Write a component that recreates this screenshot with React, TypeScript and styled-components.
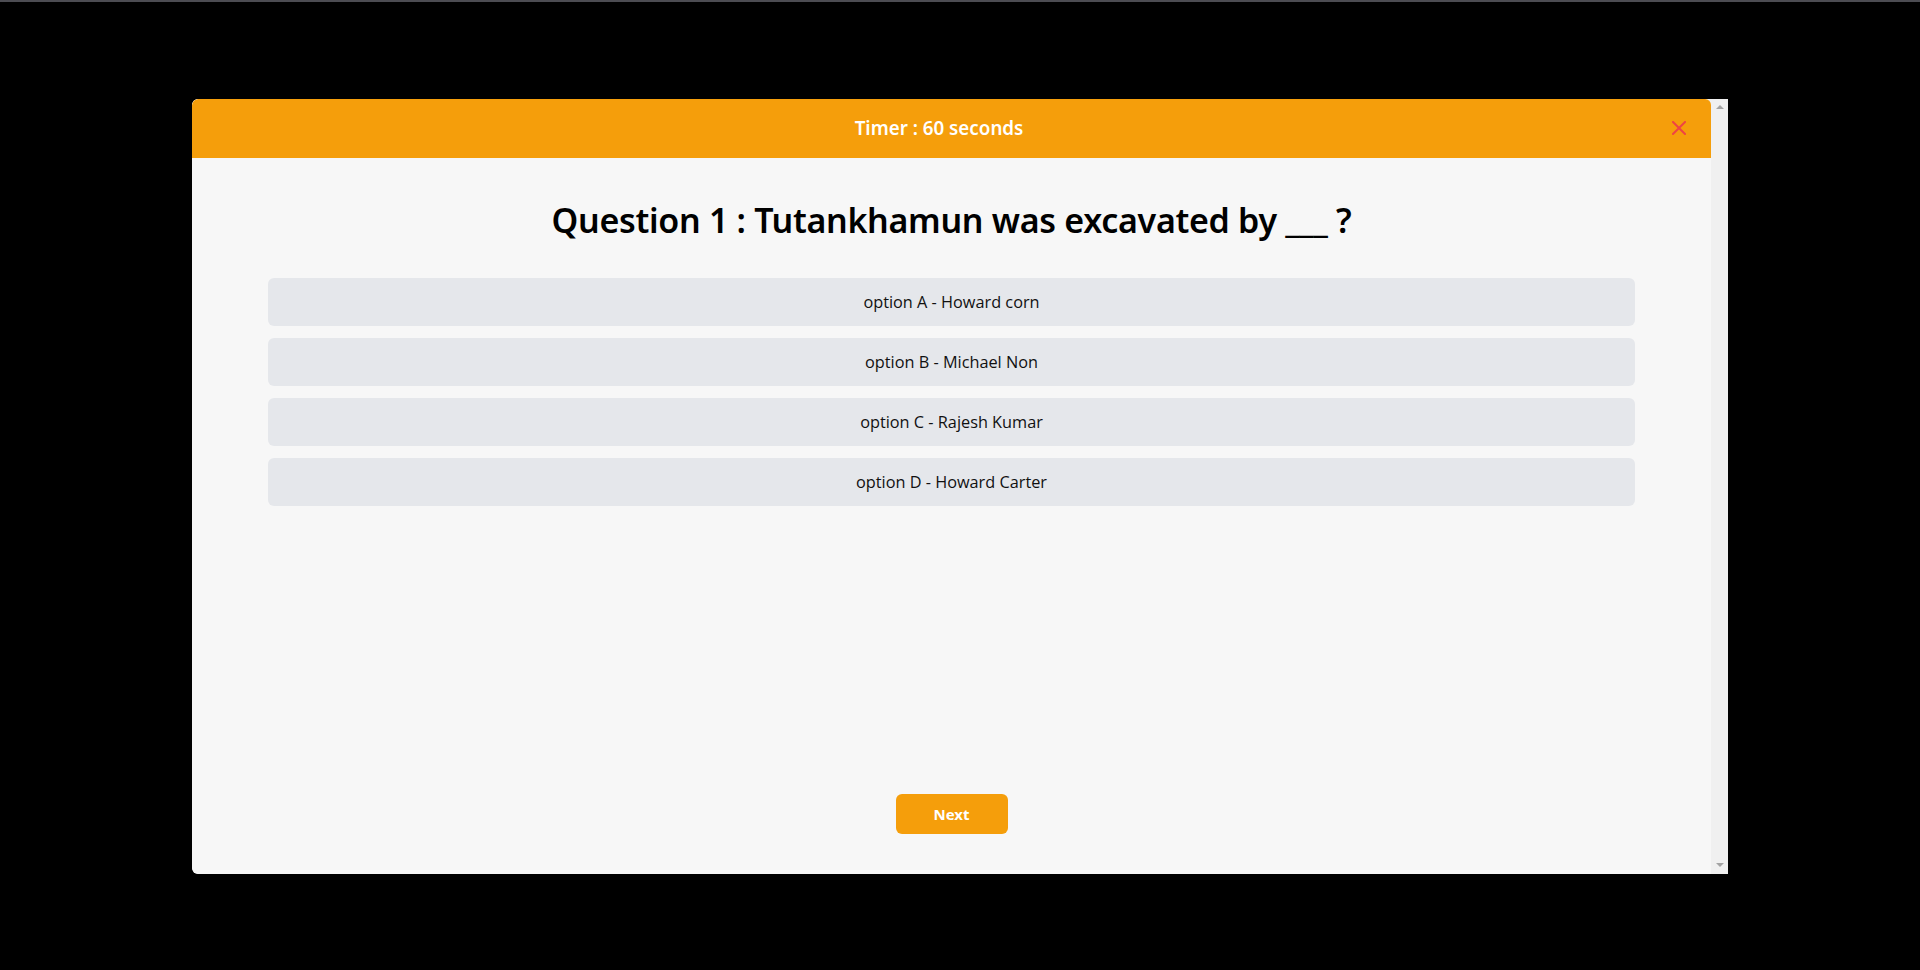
import React from "react";
import styled, { createGlobalStyle } from "styled-components";

const GlobalStyle = createGlobalStyle`
  html, body {
    margin: 0;
    padding: 0;
    background: #000;
  }
  body {
    border-top: 2px solid #4c4c52;
    font-family: "Open Sans", "Noto Sans", sans-serif;
  }
  * { box-sizing: border-box; }
`;

const Page = styled.div`
  height: 968px;
  display: flex;
  align-items: center;
  justify-content: center;
`;

const Modal = styled.div`
  width: 1536px;
  height: 775px;
  display: flex;
  background: #f0f0f0;
  border-radius: 6px 0 0 6px;
  overflow: hidden;
`;

const Panel = styled.div`
  flex: 1;
  display: flex;
  flex-direction: column;
  background: #f7f7f7;
  border-radius: 6px 6px 0 6px;
  overflow: hidden;
`;

const Header = styled.header`
  height: 59px;
  flex: none;
  display: flex;
  align-items: center;
  gap: 10px;
  padding: 0 25px 0 24px;
  background: #f59e0b;
`;

const Title = styled.div`
  flex: 1;
  text-align: center;
  color: #fff;
  font-family: "Noto Sans", sans-serif;
  font-weight: 600;
  font-size: 18.8px;
`;

const CloseButton = styled.button`
  width: 14px;
  height: 14px;
  padding: 0;
  border: none;
  background: transparent;
  display: flex;
  cursor: pointer;
`;

const Body = styled.main`
  flex: 1;
  display: flex;
  flex-direction: column;
  align-items: center;
  padding: 35px 0 40px;
`;

const Question = styled.h2`
  margin: 0 0 31px;
  font-family: "Noto Sans", sans-serif;
  font-weight: 600;
  font-size: 34px;
  line-height: 54px;
  color: #000;
  letter-spacing: -0.3px;
`;

const Options = styled.div`
  width: 90%;
  display: flex;
  flex-direction: column;
  gap: 12px;
`;

const Option = styled.button`
  height: 48px;
  border: none;
  border-radius: 6px;
  background: #e5e7eb;
  color: #111;
  font-family: "Open Sans", sans-serif;
  font-size: 16.3px;
  cursor: pointer;
`;

const NextButton = styled.button`
  margin-top: auto;
  width: 112px;
  height: 40px;
  border: none;
  border-radius: 6px;
  background: #f59e0b;
  color: #fff;
  font-family: "Noto Sans", sans-serif;
  font-weight: 700;
  font-size: 15px;
  cursor: pointer;
`;

const Scrollbar = styled.div`
  width: 17px;
  flex: none;
  background: #f0f0f0;
  display: flex;
  flex-direction: column;
  justify-content: space-between;
  align-items: center;
  padding: 6px 0 7px;
`;

const Arrow = styled.div<{ $down?: boolean }>`
  width: 0;
  height: 0;
  border-left: 4px solid transparent;
  border-right: 4px solid transparent;
  ${(p) =>
    p.$down
      ? "border-top: 4px solid #a3a3a3;"
      : "border-bottom: 4px solid #a3a3a3;"}
`;

const options = [
  "option A - Howard corn",
  "option B - Michael Non",
  "option C - Rajesh Kumar",
  "option D - Howard Carter",
];

export default function App() {
  return (
    <>
      <GlobalStyle />
      <Page>
        <Modal>
          <Panel>
            <Header>
              <Title>Timer : 60 seconds</Title>
              <CloseButton aria-label="close">
                <svg width="14" height="14" viewBox="0 0 14 14">
                  <path
                    d="M1 1 L13 13 M13 1 L1 13"
                    stroke="#ef4444"
                    strokeWidth="2"
                    strokeLinecap="square"
                  />
                </svg>
              </CloseButton>
            </Header>
            <Body>
              <Question>Question 1 : Tutankhamun was excavated by ___ ?</Question>
              <Options>
                {options.map((o) => (
                  <Option key={o}>{o}</Option>
                ))}
              </Options>
              <NextButton>Next</NextButton>
            </Body>
          </Panel>
          <Scrollbar>
            <Arrow />
            <Arrow $down />
          </Scrollbar>
        </Modal>
      </Page>
    </>
  );
}
